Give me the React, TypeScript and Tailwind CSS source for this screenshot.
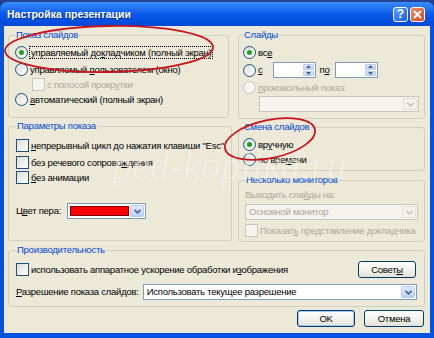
import type { ReactNode } from 'react';

const font = "font-['Liberation_Sans',Arial,sans-serif]";

function Radio({ checked, disabled, children }: { checked?: boolean; disabled?: boolean; children: ReactNode }) {
  return (
    <div className="flex items-center h-[15px] gap-[2px]">
      <span
        className={`flex items-center justify-center w-[13px] h-[13px] rounded-full border shrink-0 ${
          disabled ? 'border-[#CAC8BB] bg-[#f5f4ee]' : 'border-[#1C5180] bg-gradient-to-br from-[#DCDCD7] to-white'
        }`}
      >
        {checked && <span className="w-[5px] h-[5px] rounded-full bg-[#21A121]" />}
      </span>
      <span className={disabled ? 'text-[#ACA899]' : 'text-black'}>{children}</span>
    </div>
  );
}

function Check({ disabled, children }: { disabled?: boolean; children: ReactNode }) {
  return (
    <div className="flex items-center h-[15px] gap-[2px]">
      <span
        className={`w-[13px] h-[13px] border shrink-0 ${
          disabled ? 'border-[#CAC8BB] bg-[#f5f4ee]' : 'border-[#1C5180] bg-gradient-to-br from-[#DCDCD7] to-white'
        }`}
      />
      <span className={disabled ? 'text-[#ACA899]' : 'text-black'}>{children}</span>
    </div>
  );
}

function ArrowBtn({ disabled }: { disabled?: boolean }) {
  return (
    <span
      className={`flex items-center justify-center w-[14px] h-full shrink-0 rounded-[2px] border ${
        disabled ? 'border-[#E4E2D8] bg-[#F2F1EA]' : 'border-[#B6CBF5] bg-gradient-to-b from-[#E2EBFE] to-[#B9CFFA]'
      }`}
    >
      <svg width="7" height="5" viewBox="0 0 7 5">
        <path d="M0.5 0.8 L3.5 3.8 L6.5 0.8" fill="none" stroke={disabled ? '#C9C7BA' : '#4D6185'} strokeWidth="1.6" />
      </svg>
    </span>
  );
}

function Combo({ w, disabled, children }: { w: string; disabled?: boolean; children?: ReactNode }) {
  return (
    <div
      className={`flex items-stretch h-[16px] border p-[1px] ${w} ${
        disabled ? 'border-[#C9C7BA] bg-[#F4F3EE]' : 'border-[#7F9DB9] bg-white'
      }`}
    >
      <div className={`flex-1 flex items-center px-[2px] ${disabled ? 'text-[#ACA899]' : 'text-black'}`}>{children}</div>
      <ArrowBtn disabled={disabled} />
    </div>
  );
}

function Spin() {
  return (
    <div className="flex items-stretch w-[43px] h-[16px] border border-[#7F9DB9] bg-white p-[1px]">
      <div className="flex-1" />
      <div className="flex flex-col w-[11px] gap-px">
        {[0, 1].map((i) => (
          <span
            key={i}
            className="flex-1 flex items-center justify-center rounded-[1px] border border-[#B6CBF5] bg-gradient-to-b from-[#E2EBFE] to-[#B9CFFA]"
          >
            <svg width="5" height="3" viewBox="0 0 5 3">
              <path d={i === 0 ? 'M0 3 L2.5 0 L5 3Z' : 'M0 0 L2.5 3 L5 0Z'} fill="#4D6185" />
            </svg>
          </span>
        ))}
      </div>
    </div>
  );
}

function Group({ title, className, children }: { title: string; className: string; children?: ReactNode }) {
  return (
    <fieldset className={`border border-[#D0D0BF] rounded-[3px] ${className}`}>
      <legend className="px-[1px] leading-[12px] text-[#0046D5]">{title}</legend>
      {children}
    </fieldset>
  );
}

function Button({ children, def, className = '' }: { children: ReactNode; def?: boolean; className?: string }) {
  return (
    <button
      className={`h-[17px] flex items-center justify-center rounded-[3px] border border-[#003C74] bg-gradient-to-b from-white via-[#F4F3EE] to-[#E3E1D6] text-black ${
        def ? 'shadow-[inset_0_0_0_1px_#A8C4F0]' : ''
      } ${className}`}
    >
      {children}
    </button>
  );
}

const U = ({ children }: { children: ReactNode }) => <span className="underline">{children}</span>;

export default function App() {
  return (
    <div
      className={`relative w-[434px] h-[338px] bg-[#23418f] overflow-hidden whitespace-nowrap text-[9.5px] tracking-[-0.25px] leading-[12px] ${font}`}
    >
      <div className="flex flex-col h-full pt-[2px]">
        <div className="flex flex-col flex-1 rounded-t-[7px] bg-[#0452E0] px-[4px] pb-[5px]">
          {/* title bar */}
          <div className="flex items-center h-[24px] -mx-[4px] px-[7px] rounded-t-[7px] bg-gradient-to-b from-[#3C8DFB] via-[#0A5AEC] to-[#0348D6]">
            <span className="flex-1 text-white font-bold text-[10.5px] tracking-normal [text-shadow:1px_1px_0_#0a2f8c]">
              Настройка презентации
            </span>
            <span className="flex items-center justify-center w-[15px] h-[15px] rounded-[3px] border border-white bg-gradient-to-br from-[#5a9bff] to-[#1f5fe6] text-white font-bold text-[12px] tracking-normal">
              ?
            </span>
            <span className="flex items-center justify-center w-[15px] h-[15px] ml-[2px] mr-[2px] rounded-[3px] border border-white bg-gradient-to-br from-[#ee8a64] to-[#d84424]">
              <svg width="9" height="9" viewBox="0 0 9 9">
                <path d="M1 1 L8 8 M8 1 L1 8" stroke="white" strokeWidth="2" />
              </svg>
            </span>
          </div>

          {/* body */}
          <div className="flex flex-col flex-1 bg-[#ECE9D8] pl-[4px] pr-[5px] pt-[3px]">
            <div className="flex gap-[9px]">
              <div className="flex flex-col w-[221px]">
                <Group title="Показ слайдов" className="h-[89px] px-[6px]">
                  <div className="flex flex-col pt-[4px]">
                    <div className="flex items-center h-[15px] gap-[1px]">
                      <span className="flex items-center justify-center w-[13px] h-[13px] rounded-full border border-[#1C5180] bg-gradient-to-br from-[#DCDCD7] to-white shrink-0">
                        <span className="w-[5px] h-[5px] rounded-full bg-[#21A121]" />
                      </span>
                      <span className="border border-dotted border-black px-[1px] leading-[11px]">
                        управляемый до<U>к</U>ладчиком (полный экран)
                      </span>
                    </div>
                    <div className="mt-[2px]">
                      <Radio>
                        управляемый <U>п</U>ользователем (окно)
                      </Radio>
                    </div>
                    <div className="ml-[17px]">
                      <Check disabled>
                        с полосой прокр<U>у</U>тки
                      </Check>
                    </div>
                    <Radio>
                      <U>а</U>втоматический (полный экран)
                    </Radio>
                  </div>
                </Group>
                <Group title="Параметры показа" className="h-[121px] mt-[2px] px-[7px]">
                  <div className="flex flex-col pt-[6px]">
                    <Check>
                      <U>н</U>епрерывный цикл до нажатия клавиши "Esc"
                    </Check>
                    <div className="mt-[2px]">
                      <Check>
                        без речевого сопрово<U>ж</U>дения
                      </Check>
                    </div>
                    <Check>
                      <U>б</U>ез анимации
                    </Check>
                    <div className="flex items-center gap-[6px] mt-[18px]">
                      <span>
                        Ц<U>в</U>ет пера:
                      </span>
                      <div className="flex items-stretch w-[79px] h-[16px] border border-[#7F9DB9] bg-white p-[1px]">
                        <div className="flex-1 flex items-center px-[1px]">
                          <span className="w-full h-[10px] bg-[#FF0000] border border-[#800000]" />
                        </div>
                        <ArrowBtn />
                      </div>
                    </div>
                  </div>
                </Group>
              </div>

              <div className="flex flex-col w-[187px]">
                <Group title="Слайды" className="h-[90px] px-[4px]">
                  <div className="flex flex-col pt-[4px]">
                    <Radio checked>
                      вс<U>е</U>
                    </Radio>
                    <div className="flex items-center gap-[4px] mt-[2px]">
                      <Radio>
                        <U>с</U>
                      </Radio>
                      <div className="ml-[6px]">
                        <Spin />
                      </div>
                      <span>
                        п<U>о</U>
                      </span>
                      <div className="ml-[2px]">
                        <Spin />
                      </div>
                    </div>
                    <div className="mt-[2px]">
                      <Radio disabled>
                        <U>п</U>роизвольный показ:
                      </Radio>
                    </div>
                    <div className="ml-[16px] mt-[1px]">
                      <Combo w="w-[160px]" disabled />
                    </div>
                  </div>
                </Group>
                <Group title="Смена слайдов" className="h-[50px] mt-[2px] px-[4px]">
                  <div className="flex flex-col pt-[4px]">
                    <Radio checked>
                      вр<U>у</U>чную
                    </Radio>
                    <Radio>
                      по вре<U>м</U>ени
                    </Radio>
                  </div>
                </Group>
                <Group title="Несколько мониторов" className="h-[68px] mt-[3px] px-[6px]">
                  <div className="flex flex-col pt-[3px]">
                    <span className="text-[#ACA899]">
                      Выводить сла<U>й</U>ды на:
                    </span>
                    <div className="mt-[3px]">
                      <Combo w="w-[173px]" disabled>
                        Основной монитор
                      </Combo>
                    </div>
                    <div className="mt-[3px]">
                      <Check disabled>
                        Показат<U>ь</U> представление докладчика
                      </Check>
                    </div>
                  </div>
                </Group>
              </div>
            </div>

            <Group title="Производительность" className="h-[63px] mt-[2px] px-[7px]">
              <div className="flex flex-col pt-[5px]">
                <div className="flex items-center">
                  <div className="flex-1">
                    <Check>
                      использовать аппаратное ускорение обработки и<U>з</U>ображения
                    </Check>
                  </div>
                  <Button className="w-[58px] mr-[1px]">
                    Совет<U>ы</U>
                  </Button>
                </div>
                <div className="flex items-center gap-[4px] mt-[6px]">
                  <span>
                    <U>Р</U>азрешение показа слайдов:
                  </span>
                  <Combo w="flex-1">Использовать текущее разрешение</Combo>
                </div>
              </div>
            </Group>

            <div className="flex justify-end gap-[9px] mt-[3px] pr-[1px]">
              <Button def className="w-[58px]">
                OK
              </Button>
              <Button className="w-[60px]">Отмена</Button>
            </div>
          </div>
        </div>
      </div>

      {/* watermark */}
      <span className="absolute left-[112px] top-[146px] italic font-['Liberation_Serif',serif] text-[40px] leading-[40px] tracking-normal text-[#F6F4EC] opacity-50 [text-shadow:0_0_1px_#cfccbd] pointer-events-none">
        ped-kopilka.ru
      </span>

      {/* hand-drawn annotations */}
      <svg className="absolute inset-0 pointer-events-none" width="434" height="338" viewBox="0 0 434 338">
        <ellipse cx="109" cy="49" rx="104" ry="23" transform="rotate(-1 109 49)" fill="none" stroke="#C8141C" strokeWidth="1.8" />
        <ellipse cx="270" cy="139" rx="46" ry="19" transform="rotate(-12 270 139)" fill="none" stroke="#C8141C" strokeWidth="1.8" />
      </svg>
    </div>
  );
}
